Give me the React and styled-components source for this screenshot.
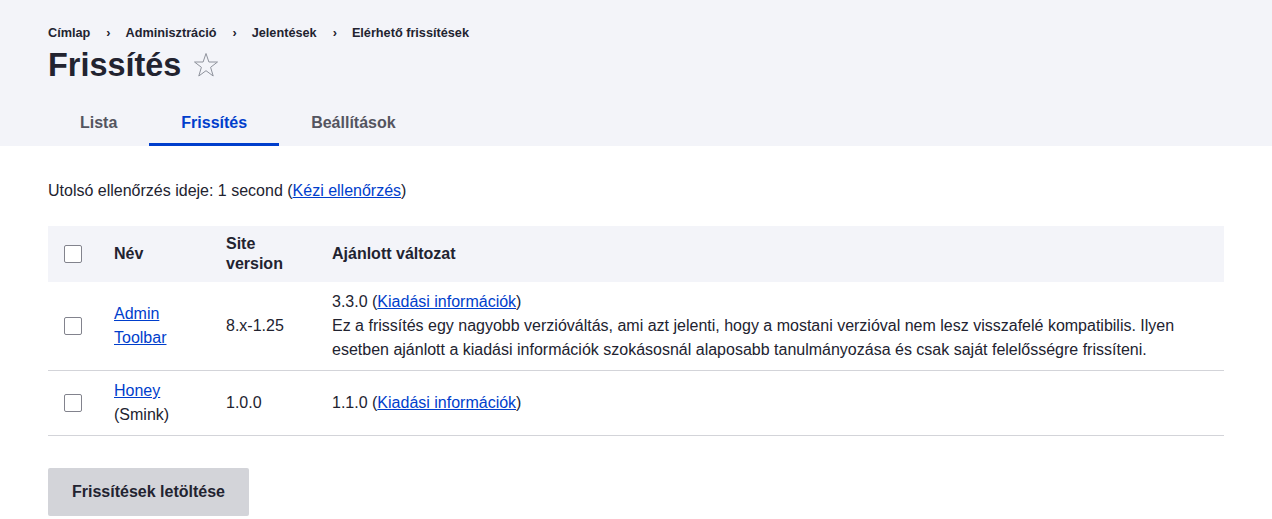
import styled, { createGlobalStyle } from 'styled-components';

const GlobalStyle = createGlobalStyle`
  html, body {
    margin: 0;
    padding: 0;
    background: #fff;
    font-family: "Liberation Sans", Arial, sans-serif;
    color: #222330;
  }
  * { box-sizing: border-box; }
`;

const Header = styled.header`
  background: #f3f4f9;
  padding: 25px 48px 0;
`;

const Crumbs = styled.nav`
  display: flex;
  align-items: center;
  font-size: 12.7px;
  line-height: 16px;
  font-weight: 700;
  color: #222330;
`;

const Sep = styled.span`
  padding: 0 15px 0 16px;
  font-weight: 700;
`;

const TitleRow = styled.div`
  display: flex;
  align-items: center;
  gap: 12px;
  margin-top: 4px;
  height: 40px;
`;

const Title = styled.h1`
  margin: 0;
  font-size: 32.4px;
  line-height: 40px;
  font-weight: 700;
  color: #222330;
`;

const Tabs = styled.ul`
  list-style: none;
  display: flex;
  margin: 13px 0 0;
  padding: 0;
`;

const Tab = styled.li`
  height: 48px;
  padding: 5px 32px 0;
  display: flex;
  align-items: center;
  font-size: 16px;
  font-weight: 700;
  color: ${p => (p.$active ? '#003ecc' : '#545560')};
  border-bottom: 3px solid ${p => (p.$active ? '#003ecc' : 'transparent')};
`;

const Main = styled.main`
  padding: 33px 48px 0;
`;

const Info = styled.p`
  margin: 0 0 23px;
  font-size: 16px;
  line-height: 24px;
`;

const A = styled.a`
  color: #003ecc;
  text-decoration: underline;
`;

const Table = styled.table`
  width: 100%;
  border-collapse: collapse;
  table-layout: fixed;
  font-size: 16px;
`;

const Th = styled.th`
  background: #f3f4f9;
  text-align: left;
  font-weight: 700;
  line-height: 20px;
  padding: 8px 16px;
  height: 56px;
  width: ${p => p.$w || 'auto'};
  vertical-align: middle;
`;

const Tr = styled.tr`
  border-bottom: 1px solid #d3d4d9;
`;

const Td = styled.td`
  padding: 8px 16px;
  line-height: 24px;
  vertical-align: middle;
`;

const Box = styled.span`
  display: block;
  width: 18px;
  height: 18px;
  border: 1px solid #82838d;
  border-radius: 2px;
  background: #fff;
`;

const Button = styled.button`
  margin-top: 32px;
  height: 48px;
  padding: 0 24px;
  border: none;
  border-radius: 2px;
  background: #d3d4d9;
  color: #222330;
  font-family: inherit;
  font-size: 16px;
  font-weight: 700;
`;

const Star = () => (
  <svg width="26" height="26" viewBox="0 0 26 26">
    <polygon
      points="13,1.5 15.9,10 24.5,10 17.6,15.3 20.2,24 13,18.7 5.8,24 8.4,15.3 1.5,10 10.1,10"
      fill="none"
      stroke="#8e929c"
      strokeWidth="1"
    />
  </svg>
);

export default function App() {
  return (
    <>
      <GlobalStyle />
      <Header>
        <Crumbs>
          <span>Címlap</span>
          <Sep>›</Sep>
          <span>Adminisztráció</span>
          <Sep>›</Sep>
          <span>Jelentések</span>
          <Sep>›</Sep>
          <span>Elérhető frissítések</span>
        </Crumbs>
        <TitleRow>
          <Title>Frissítés</Title>
          <Star />
        </TitleRow>
        <Tabs>
          <Tab>Lista</Tab>
          <Tab $active>Frissítés</Tab>
          <Tab>Beállítások</Tab>
        </Tabs>
      </Header>
      <Main>
        <Info>
          Utolsó ellenőrzés ideje: 1 second (<A href="#">Kézi ellenőrzés</A>)
        </Info>
        <Table>
          <thead>
            <tr>
              <Th $w="50px"><Box /></Th>
              <Th $w="112px">Név</Th>
              <Th $w="106px">Site version</Th>
              <Th>Ajánlott változat</Th>
            </tr>
          </thead>
          <tbody>
            <Tr>
              <Td><Box /></Td>
              <Td><A href="#">Admin Toolbar</A></Td>
              <Td>8.x-1.25</Td>
              <Td>
                3.3.0 (<A href="#">Kiadási információk</A>)
                <br />
                Ez a frissítés egy nagyobb verzióváltás, ami azt jelenti, hogy a mostani verzióval nem lesz visszafelé kompatibilis. Ilyen esetben ajánlott a kiadási információk szokásosnál alaposabb tanulmányozása és csak saját felelősségre frissíteni.
              </Td>
            </Tr>
            <Tr>
              <Td><Box /></Td>
              <Td><A href="#">Honey</A><br />(Smink)</Td>
              <Td>1.0.0</Td>
              <Td>1.1.0 (<A href="#">Kiadási információk</A>)</Td>
            </Tr>
          </tbody>
        </Table>
        <Button>Frissítések letöltése</Button>
      </Main>
    </>
  );
}
